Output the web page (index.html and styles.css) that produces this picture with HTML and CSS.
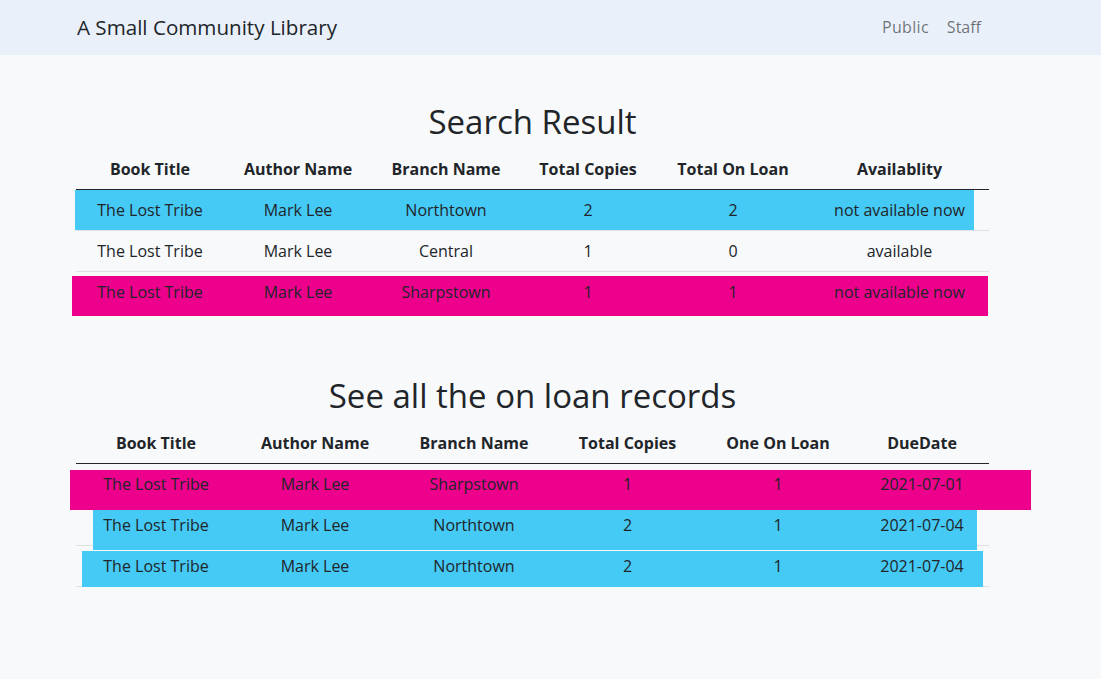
FILE: index.html
```html
<!DOCTYPE html>
<html lang="en">
<head>
<meta charset="utf-8">
<title>A Small Community Library</title>
<link rel="stylesheet" href="styles.css">
</head>
<body>
<nav class="navbar">
  <div class="nav-inner">
    <a class="brand" href="#">A Small Community Library</a>
    <ul class="nav-links">
      <li><a href="#">Public</a></li>
      <li><a href="#">Staff</a></li>
    </ul>
  </div>
</nav>
<main class="content">
  <section class="block block-search">
    <h1 class="title">Search Result</h1>
    <div class="table-wrap">
      <div class="band band-cyan s1"></div>
      <div class="band band-pink s3"></div>
      <table class="data search">
        <thead>
          <tr><th>Book Title</th><th>Author Name</th><th>Branch Name</th><th>Total Copies</th><th>Total On Loan</th><th>Availablity</th></tr>
        </thead>
        <tbody>
          <tr><td>The Lost Tribe</td><td>Mark Lee</td><td>Northtown</td><td>2</td><td>2</td><td>not available now</td></tr>
          <tr><td>The Lost Tribe</td><td>Mark Lee</td><td>Central</td><td>1</td><td>0</td><td>available</td></tr>
          <tr><td>The Lost Tribe</td><td>Mark Lee</td><td>Sharpstown</td><td>1</td><td>1</td><td>not available now</td></tr>
        </tbody>
      </table>
    </div>
  </section>
  <section class="block block-loans">
    <h1 class="title">See all the on loan records</h1>
    <div class="table-wrap">
      <div class="band band-pink l1"></div>
      <div class="band band-cyan l2"></div>
      <div class="band band-cyan l3"></div>
      <table class="data loans">
        <thead>
          <tr><th>Book Title</th><th>Author Name</th><th>Branch Name</th><th>Total Copies</th><th>One On Loan</th><th>DueDate</th></tr>
        </thead>
        <tbody>
          <tr><td>The Lost Tribe</td><td>Mark Lee</td><td>Sharpstown</td><td>1</td><td>1</td><td>2021-07-01</td></tr>
          <tr><td>The Lost Tribe</td><td>Mark Lee</td><td>Northtown</td><td>2</td><td>1</td><td>2021-07-04</td></tr>
          <tr><td>The Lost Tribe</td><td>Mark Lee</td><td>Northtown</td><td>2</td><td>1</td><td>2021-07-04</td></tr>
        </tbody>
      </table>
    </div>
  </section>
</main>
</body>
</html>
```

FILE: styles.css
```css
* { box-sizing: border-box; }

html, body {
  margin: 0;
  padding: 0;
}

body {
  background: #f8f9fa;
  color: #212529;
  font-family: "Open Sans", "Noto Sans", "DejaVu Sans", sans-serif;
  font-size: 16px;
  line-height: 24px;
}

.navbar {
  background: #e9f0fa;
  height: 55px;
}

.nav-inner {
  width: 913px;
  margin-left: 76px;
  height: 55px;
  display: flex;
  align-items: center;
  justify-content: space-between;
}

.brand {
  font-size: 20.6px;
  line-height: 30px;
  color: #212529;
  text-decoration: none;
  padding-left: 1px;
  margin-top: -2px;
}

.nav-links {
  list-style: none;
  margin: 0;
  padding: 0;
  display: flex;
  margin-top: -2px;
}

.nav-links a {
  display: block;
  padding: 8px 8px;
  color: rgba(0, 0, 0, 0.55);
  text-decoration: none;
}

.nav-links li:first-child a {
  padding-right: 10px;
  letter-spacing: 0.3px;
}

.content {
  width: 913px;
  margin-left: 76px;
  padding-top: 44px;
}

.title {
  margin: 0 0 4px;
  font-size: 33px;
  line-height: 46px;
  font-weight: 400;
  text-align: center;
}

.block-loans {
  margin-top: 60px;
}

.table-wrap {
  position: relative;
}

.band {
  position: absolute;
  height: 40px;
  z-index: 1;
}

.band-cyan { background: #45c9f5; }
.band-pink { background: #ec008c; }

.s1 { left: -1px; top: 41px; width: 899px; }
.s3 { left: -4px; top: 127px; width: 916px; }

.l1 { left: -6px; top: 47px; width: 961px; }
.l2 { left: 17px; top: 87px; width: 884px; }
.l3 { left: 6px; top: 128px; width: 901px; }

.data {
  width: 100%;
  border-collapse: collapse;
  table-layout: fixed;
}

.data th,
.data td {
  position: relative;
  z-index: 2;
  padding: 8px;
  text-align: center;
  white-space: nowrap;
}

.data th {
  font-weight: 700;
}

.data thead tr {
  border-bottom: 1px solid #212529;
}

.data tbody tr {
  border-bottom: 1px solid #dee2e6;
}

.search th:nth-child(1) { width: 148px; }
.search th:nth-child(2) { width: 148px; }
.search th:nth-child(3) { width: 148px; }
.search th:nth-child(4) { width: 136px; }
.search th:nth-child(5) { width: 154px; }
.search th:nth-child(6) { width: 179px; }

.loans th:nth-child(1) { width: 160px; }
.loans th:nth-child(2) { width: 158px; }
.loans th:nth-child(3) { width: 160px; }
.loans th:nth-child(4) { width: 147px; }
.loans th:nth-child(5) { width: 154px; }
.loans th:nth-child(6) { width: 134px; }
```
